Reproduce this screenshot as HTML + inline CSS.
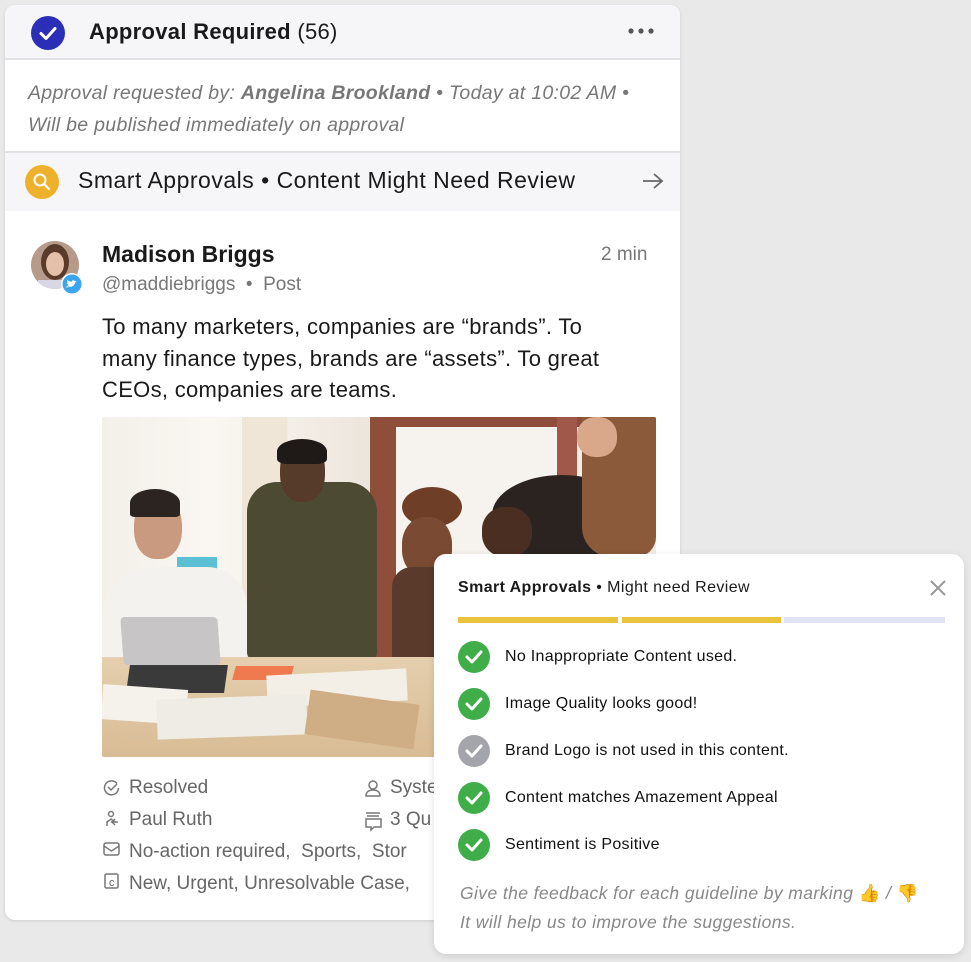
<!DOCTYPE html>
<html><head><meta charset="utf-8"><style>
*{box-sizing:border-box;margin:0;padding:0}
body{width:971px;height:962px;background:#e9e9e9;font-family:"Liberation Sans",Arial,sans-serif;position:relative;overflow:hidden;color:#1a1a1a}
.card{position:absolute;left:5px;top:5px;width:675px;height:915px;background:#fff;border-radius:10px;overflow:hidden;box-shadow:0 1px 3px rgba(0,0,0,.12)}
.hdr{height:55px;background:#f6f6f8;border-bottom:2px solid #e2e2e6;position:relative}
.abs{position:absolute}
.meta{color:#777;font-style:italic;font-size:19.5px;letter-spacing:0.3px;line-height:32px;position:absolute;left:23px;top:72px}
.smart{position:absolute;left:0;top:146px;width:675px;height:60px;background:#f6f6f8;border-top:2px solid #e2e2e6}
.photo{position:absolute;left:97px;top:412px;width:554px;height:340px;background:#f1ebe4;overflow:hidden;border-radius:2px}
.photo div{position:absolute}
.ft{position:absolute;font-size:19px;color:#666}
.pop{position:absolute;left:434px;top:554px;width:530px;height:400px;background:#fff;border-radius:12px;box-shadow:0 2px 8px rgba(0,0,0,.12)}
.row{position:absolute;left:24px;height:32px;display:flex;align-items:center;font-size:16px;letter-spacing:0.3px;color:#111}
.ck{width:32px;height:32px;border-radius:50%;background:#3fae49;margin-right:15px;display:flex;align-items:center;justify-content:center}
</style></head><body>
<div class="card">
 <div class="hdr">
  <svg class="abs" style="left:25px;top:10px" width="36" height="36"><circle cx="18" cy="18" r="17" fill="#2b2fb8"/><path d="M11 18.5l5 5 9-10" stroke="#fff" stroke-width="3" fill="none" stroke-linecap="round" stroke-linejoin="round"/></svg>
  <div class="abs" style="left:84px;top:14px;font-size:22px;letter-spacing:0.3px"><b style="font-weight:600">Approval Required</b> (56)</div>
  <svg class="abs" style="left:622px;top:22px" width="30" height="8"><circle cx="4" cy="4" r="2.6" fill="#555"/><circle cx="14" cy="4" r="2.6" fill="#555"/><circle cx="24" cy="4" r="2.6" fill="#555"/></svg>
 </div>
 <div class="meta">Approval requested by: <b>Angelina Brookland</b> • Today at 10:02 AM •<br>Will be published immediately on approval</div>
 <div class="smart">
  <svg class="abs" style="left:19px;top:11px" width="36" height="36"><circle cx="18" cy="18" r="17" fill="#eeb12c"/><circle cx="16" cy="16" r="5.5" stroke="#fff" stroke-width="2" fill="none"/><path d="M20 20l5 5" stroke="#fff" stroke-width="2.2" stroke-linecap="round"/></svg>
  <div class="abs" style="left:73px;top:14px;font-size:23px;letter-spacing:0.5px">Smart Approvals • Content Might Need Review</div>
  <svg class="abs" style="left:636px;top:18px" width="24" height="20"><path d="M2 10h19M13 3l8 7-8 7" stroke="#666" stroke-width="1.8" fill="none"/></svg>
 </div>
 <svg class="abs" style="left:25px;top:235px" width="60" height="60"><defs><clipPath id="c"><circle cx="25" cy="25" r="24"/></clipPath></defs><g clip-path="url(#c)"><rect width="50" height="50" fill="#b79b8a"/><ellipse cx="25" cy="22" rx="14" ry="18" fill="#5a3a2a"/><ellipse cx="25" cy="24" rx="9" ry="12" fill="#e4c0a8"/><rect x="8" y="40" width="34" height="12" fill="#d7d7e6"/></g><circle cx="42" cy="44" r="11" fill="#fff"/><circle cx="42" cy="44" r="9.5" fill="#3ba6ee"/><path d="M37 46c3 1.5 7 1 8-3l1.5-2-1.6.3c-.6-1.5-2.8-1.5-3.3.4-2 0-3.3-1-4.3-2-.5 1.5 0 2.6 1 3.2-.6 0-1 0-1.3-.3 0 1.2.8 2 1.8 2.3-.4.1-.8.1-1.2 0 .3 1 1.2 1.6 2 1.6-1 .8-2.2 1-3.6.9z" fill="#fff"/></svg>
 <div class="abs" style="left:97px;top:236px;font-size:23px;font-weight:600">Madison Briggs</div>
 <div class="abs" style="left:596px;top:239px;font-size:19px;color:#777">2 min</div>
 <div class="abs" style="left:97px;top:269px;font-size:19px;color:#777">@maddiebriggs &nbsp;• &nbsp;Post</div>
 <div class="abs" style="left:97px;top:306px;font-size:22px;letter-spacing:0.3px;line-height:31.5px;width:530px">To many marketers, companies are “brands”. To many finance types, brands are “assets”. To great CEOs, companies are teams.</div>
 <div class="photo">
  <div style="left:0;top:0;width:270px;height:250px;background:linear-gradient(90deg,#f3efe9,#faf7f2 40%,#ece5dc)"></div>
  <div style="left:140px;top:0;width:45px;height:240px;background:#f0e6d8"></div>
  <div style="left:268px;top:0;width:26px;height:250px;background:#8e4e3a"></div>
  <div style="left:268px;top:0;width:290px;height:10px;background:#8e4e3a"></div>
  <div style="left:294px;top:10px;width:165px;height:240px;background:#f6f2ee"></div>
  <div style="left:455px;top:0;width:20px;height:200px;background:#a0584a"></div>
  <div style="left:75px;top:140px;width:40px;height:55px;background:#5cc0d4"></div>
  <div style="left:0;top:150px;width:145px;height:140px;background:#f4f2ee;border-radius:50px 40px 0 0"></div>
  <div style="left:32px;top:80px;width:48px;height:62px;background:#c99a80;border-radius:45%"></div>
  <div style="left:28px;top:72px;width:50px;height:28px;background:#2c2420;border-radius:50% 50% 10% 10%"></div>
  <div style="left:145px;top:65px;width:130px;height:180px;background:#4c4a33;border-radius:30px 30px 10px 10px"></div>
  <div style="left:178px;top:25px;width:45px;height:60px;background:#563a2a;border-radius:45%"></div>
  <div style="left:175px;top:22px;width:50px;height:25px;background:#1f1a17;border-radius:50% 50% 20% 20%"></div>
  <div style="left:300px;top:70px;width:60px;height:40px;background:#6e3f26;border-radius:50%"></div>
  <div style="left:300px;top:100px;width:50px;height:60px;background:#7a4a32;border-radius:45%"></div>
  <div style="left:290px;top:150px;width:80px;height:110px;background:#5a3a2a;border-radius:20px"></div>
  <div style="left:390px;top:58px;width:140px;height:80px;background:#2a2320;border-radius:50% 50% 10% 10%"></div>
  <div style="left:380px;top:90px;width:50px;height:50px;background:#4a2e22;border-radius:45%"></div>
  <div style="left:480px;top:0;width:74px;height:140px;background:#8a5a3a;border-radius:0 0 20px 30px"></div>
  <div style="left:475px;top:0;width:40px;height:40px;background:#d9a789;border-radius:45%"></div>
  <div style="left:0;top:240px;width:554px;height:100px;background:linear-gradient(180deg,#e5cfae,#d8bc95)"></div>
  <div style="left:20px;top:200px;width:97px;height:48px;background:#c7c5c6;border-radius:4px;transform:skewX(4deg)"></div>
  <div style="left:26px;top:248px;width:98px;height:28px;background:#3a3a3a;transform:skewX(-8deg)"></div>
  <div style="left:132px;top:249px;width:58px;height:14px;background:#ef7a50;transform:skewX(-15deg)"></div>
  <div style="left:165px;top:255px;width:140px;height:32px;background:#f3efe6;transform:rotate(-3deg)"></div>
  <div style="left:0px;top:270px;width:85px;height:35px;background:#f5f2ec;transform:rotate(4deg)"></div>
  <div style="left:55px;top:280px;width:150px;height:40px;background:#efece6;transform:rotate(-2deg)"></div>
  <div style="left:205px;top:280px;width:110px;height:45px;background:#cfae85;transform:rotate(8deg)"></div>
 </div>
 <svg class="abs" style="left:97px;top:773px" width="20" height="120" fill="none" stroke="#777" stroke-width="1.5"><path d="M15 5.5a7 7 0 1 0 1.5 4.5M6 9l3 3 6-6"/><circle cx="9" cy="36" r="2.5"/><path d="M5 48v-4l4-3 4 3M9 44h7M13 41l-3 3 3 3"/><rect x="2" y="65" width="15" height="12" rx="2"/><path d="M2 68l7.5 5 7.5-5"/><rect x="3" y="96" width="13" height="14" rx="1.5"/></svg>
 <div class="ft" style="left:124px;top:772px">Resolved</div>
 <div class="ft" style="left:124px;top:804px">Paul Ruth</div>
 <div class="ft" style="left:124px;top:836px">No-action required, &nbsp;Sports, &nbsp;Stor</div>
 <div class="ft" style="left:124px;top:868px">New, Urgent, Unresolvable Case,</div>
 <div class="ft" style="left:104px;top:872px;font-size:11px">c</div>
 <svg class="abs" style="left:358px;top:773px" width="22" height="60" fill="none" stroke="#777" stroke-width="1.5"><circle cx="10" cy="7" r="4"/><path d="M3 18c0-4 3-6 7-6s7 2 7 6z"/><path d="M3 35h14M4 38h12M3 41h15v8h-7l-3 3v-3H3z"/></svg>
 <div class="ft" style="left:385px;top:772px">Syste</div>
 <div class="ft" style="left:385px;top:804px">3 Qu</div>
</div>
<div class="pop">
 <div class="abs" style="left:24px;top:25px;font-size:16px;letter-spacing:0.4px"><b>Smart Approvals</b> • Might need Review</div>
 <svg class="abs" style="left:494px;top:24px" width="20" height="20"><path d="M3 3l14 14M17 3L3 17" stroke="#999" stroke-width="2"/></svg>
 <div class="abs" style="left:24px;top:63px;width:160px;height:6px;background:#e9c23e"></div>
 <div class="abs" style="left:188px;top:63px;width:159px;height:6px;background:#e9c23e"></div>
 <div class="abs" style="left:350px;top:63px;width:161px;height:6px;background:#e1e3f5"></div>
 <div class="row" style="top:87px"><div class="ck"><svg width="18" height="14"><path d="M2 7l5 5 9-10" stroke="#fff" stroke-width="3" fill="none" stroke-linecap="round" stroke-linejoin="round"/></svg></div>No Inappropriate Content used.</div>
 <div class="row" style="top:134px"><div class="ck"><svg width="18" height="14"><path d="M2 7l5 5 9-10" stroke="#fff" stroke-width="3" fill="none" stroke-linecap="round" stroke-linejoin="round"/></svg></div>Image Quality looks good!</div>
 <div class="row" style="top:181px"><div class="ck" style="background:#a4a4ab"><svg width="18" height="14"><path d="M2 7l5 5 9-10" stroke="#fff" stroke-width="3" fill="none" stroke-linecap="round" stroke-linejoin="round"/></svg></div>Brand Logo is not used in this content.</div>
 <div class="row" style="top:228px"><div class="ck"><svg width="18" height="14"><path d="M2 7l5 5 9-10" stroke="#fff" stroke-width="3" fill="none" stroke-linecap="round" stroke-linejoin="round"/></svg></div>Content matches Amazement Appeal</div>
 <div class="row" style="top:275px"><div class="ck"><svg width="18" height="14"><path d="M2 7l5 5 9-10" stroke="#fff" stroke-width="3" fill="none" stroke-linecap="round" stroke-linejoin="round"/></svg></div>Sentiment is Positive</div>
 <div class="abs" style="left:26px;top:325px;font-size:17.5px;letter-spacing:0.4px;font-style:italic;color:#888;line-height:29px">Give the feedback for each guideline by marking <span style="color:#e9b52c;font-style:normal">👍</span> / <span style="color:#e9b52c;font-style:normal">👎</span><br>It will help us to improve the suggestions.</div>
</div>
</body></html>
